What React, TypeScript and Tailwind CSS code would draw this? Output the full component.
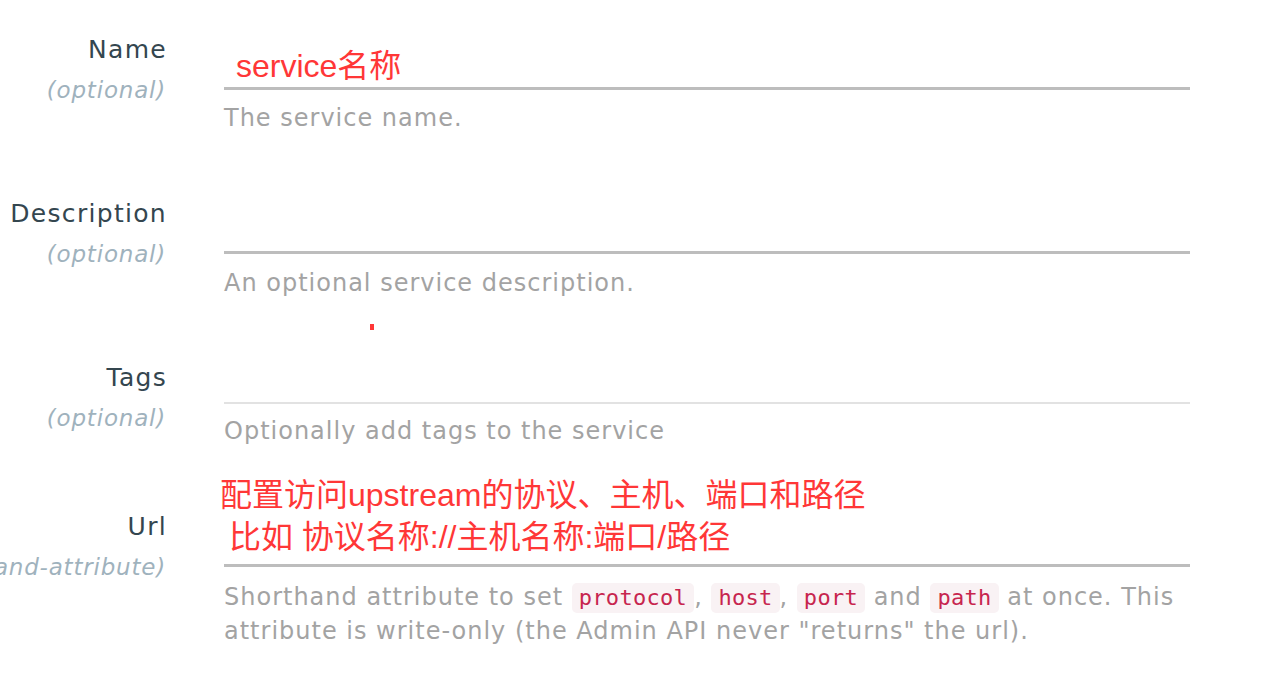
import React from "react";

const SANS = "font-['DejaVu_Sans','Noto_Sans',sans-serif]";
const CJK = "font-['Liberation_Sans','Noto_Sans_CJK_SC',sans-serif]";
const HELP = `text-[24px] text-[#a3a3a3] tracking-[1px] ${SANS}`;

function Label({ name, sub }: { name: string; sub: string }) {
  return (
    <div className={`w-[166px] shrink-0 text-right whitespace-nowrap ${SANS}`}>
      <div className="text-[25px] leading-[40px] text-[#34464f] tracking-[1.3px] mr-[-1px]">{name}</div>
      <div className="text-[23px] leading-[40px] italic text-[#9fb2bd] tracking-[0.8px] flex justify-end">
        {sub}
      </div>
    </div>
  );
}

function Code({ children }: { children: React.ReactNode }) {
  return (
    <code className="inline-block rounded-[5px] bg-[#f9f2f4] text-[#c7254e] px-[7px] leading-[30px] text-[22px] font-['DejaVu_Sans_Mono',monospace] tracking-[0.3px]">
      {children}
    </code>
  );
}

export default function App() {
  return (
    <div className="w-[1280px] h-[675px] bg-white overflow-hidden relative">
      {/* Name */}
      <div className="flex items-start mt-[30px]">
        <Label name="Name" sub="(optional)" />
        <div className="ml-[58px] w-[966px]">
          <div className="h-[57px] flex flex-col justify-end pb-[1px] pl-[12px]">
            <div className={`text-[32px] leading-[40px] text-[#ff3737] ${CJK}`}>service名称</div>
          </div>
          <div className="h-[3px] bg-[#bdbdbd]" />
          <div className={`mt-[10px] leading-[36px] ${HELP}`}>The service name.</div>
        </div>
      </div>

      {/* Description */}
      <div className="flex items-start mt-[58px]">
        <Label name="Description" sub="(optional)" />
        <div className="ml-[58px] w-[966px]">
          <div className="h-[57px]" />
          <div className="h-[3px] bg-[#bdbdbd]" />
          <div className={`mt-[11px] leading-[36px] ${HELP}`}>An optional service description.</div>
        </div>
      </div>

      {/* Tags */}
      <div className="flex items-start mt-[57px]">
        <Label name="Tags" sub="(optional)" />
        <div className="ml-[58px] w-[966px]">
          <div className="h-[44px]" />
          <div className="h-[2px] bg-[#e2e2e2]" />
          <div className={`mt-[9px] leading-[36px] ${HELP}`}>Optionally add tags to the service</div>
        </div>
      </div>

      {/* Url */}
      <div className="flex items-start mt-[58px]">
        <Label name="Url" sub="(shorthand-attribute)" />
        <div className="ml-[58px] w-[966px]">
          <div className="h-[57px] flex flex-col justify-end pb-[6px] ml-[-4px]">
            <div className={`text-[32px] leading-[42px] text-[#ff3737] whitespace-pre ${CJK}`}>
              {"配置访问upstream的协议、主机、端口和路径\n 比如 协议名称://主机名称:端口/路径"}
            </div>
          </div>
          <div className="h-[3px] bg-[#bdbdbd]" />
          <div className={`mt-[13px] leading-[34px] whitespace-nowrap ${HELP}`}>
            Shorthand attribute to set <Code>protocol</Code>, <Code>host</Code>, <Code>port</Code> and{" "}
            <Code>path</Code> at once. This
            <br />
            attribute is write-only (the Admin API never "returns" the url).
          </div>
        </div>
      </div>

      <div className="absolute left-[370px] top-[324px] w-[4px] h-[6px] bg-[#ff3737]" />
    </div>
  );
}
